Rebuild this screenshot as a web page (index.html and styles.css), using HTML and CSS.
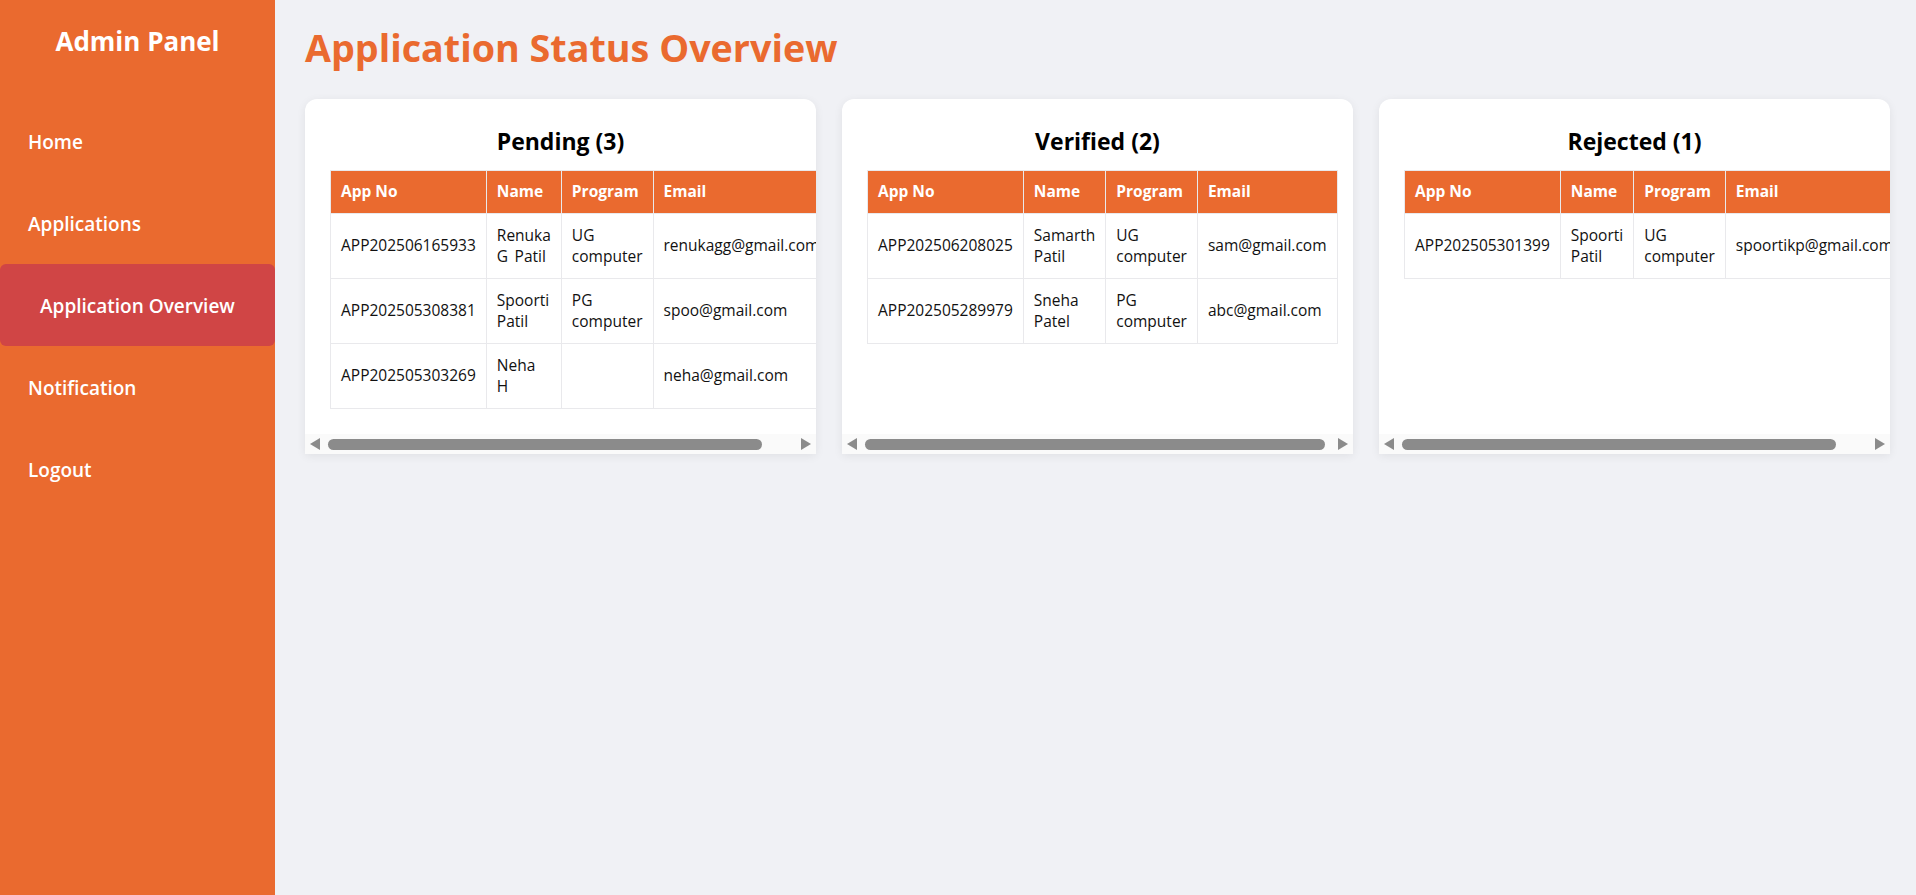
FILE: index.html
```html
<!DOCTYPE html>
<html lang="en">
<head>
<meta charset="utf-8">
<title>Admin Panel - Application Status Overview</title>
<link rel="stylesheet" href="styles.css">
</head>
<body>
<div class="layout">
  <aside class="sidebar">
    <h2 class="brand">Admin Panel</h2>
    <nav class="nav">
      <a class="nav-link" href="#">Home</a>
      <a class="nav-link" href="#">Applications</a>
      <a class="nav-link active" href="#">Application Overview</a>
      <a class="nav-link" href="#">Notification</a>
      <a class="nav-link" href="#">Logout</a>
    </nav>
  </aside>
  <main class="content">
    <h1 class="page-title">Application Status Overview</h1>
    <div class="cards">
      <section class="card">
        <div class="card-body">
          <h3 class="card-title">Pending (3)</h3>
          <table class="apps">
            <thead>
              <tr><th>App No</th><th>Name</th><th>Program</th><th>Email</th></tr>
            </thead>
            <tbody>
              <tr><td>APP202506165933</td><td>Renuka G Patil</td><td>UG computer</td><td>renukagg@gmail.com</td></tr>
              <tr><td>APP202505308381</td><td>Spoorti Patil</td><td>PG computer</td><td>spoo@gmail.com</td></tr>
              <tr><td>APP202505303269</td><td>Neha H</td><td></td><td>neha@gmail.com</td></tr>
            </tbody>
          </table>
        </div>
        <div class="hscroll">
          <span class="hscroll-btn"><span class="tri tri-left"></span></span>
          <span class="hscroll-track"><span class="hscroll-thumb" style="width: 93.3%"></span></span>
          <span class="hscroll-btn"><span class="tri tri-right"></span></span>
        </div>
      </section>
      <section class="card">
        <div class="card-body">
          <h3 class="card-title">Verified (2)</h3>
          <table class="apps">
            <thead>
              <tr><th>App No</th><th>Name</th><th>Program</th><th>Email</th></tr>
            </thead>
            <tbody>
              <tr><td>APP202506208025</td><td>Samarth Patil</td><td>UG computer</td><td>sam@gmail.com</td></tr>
              <tr><td>APP202505289979</td><td>Sneha Patel</td><td>PG computer</td><td>abc@gmail.com</td></tr>
            </tbody>
          </table>
        </div>
        <div class="hscroll">
          <span class="hscroll-btn"><span class="tri tri-left"></span></span>
          <span class="hscroll-track"><span class="hscroll-thumb" style="width: 99%"></span></span>
          <span class="hscroll-btn"><span class="tri tri-right"></span></span>
        </div>
      </section>
      <section class="card">
        <div class="card-body">
          <h3 class="card-title">Rejected (1)</h3>
          <table class="apps">
            <thead>
              <tr><th>App No</th><th>Name</th><th>Program</th><th>Email</th></tr>
            </thead>
            <tbody>
              <tr><td>APP202505301399</td><td>Spoorti Patil</td><td>UG computer</td><td>spoortikp@gmail.com</td></tr>
            </tbody>
          </table>
        </div>
        <div class="hscroll">
          <span class="hscroll-btn"><span class="tri tri-left"></span></span>
          <span class="hscroll-track"><span class="hscroll-thumb" style="width: 93.3%"></span></span>
          <span class="hscroll-btn"><span class="tri tri-right"></span></span>
        </div>
      </section>
    </div>
  </main>
</div>
</body>
</html>
```

FILE: styles.css
```css
* { box-sizing: border-box; }

html, body {
  margin: 0;
  padding: 0;
  height: 100%;
}

body {
  font-family: "Open Sans", "Noto Sans", "DejaVu Sans", sans-serif;
  background: #f0f1f5;
  color: #111;
}

.layout {
  display: flex;
  min-height: 100vh;
}

/* Sidebar */
.sidebar {
  width: 275px;
  flex: 0 0 275px;
  background: #ea6a2f;
  color: #fff;
  padding-top: 24px;
}

.brand {
  margin: 0;
  text-align: center;
  font-size: 26px;
  font-weight: 700;
  line-height: 34px;
  height: 76px;
}

.nav {
  display: flex;
  flex-direction: column;
}

.nav-link {
  display: block;
  color: #fff;
  text-decoration: none;
  font-size: 19px;
  font-weight: 600;
  line-height: 22px;
  padding: 31px 28px 29px;
  border-radius: 6px;
}

.nav-link.active {
  background: #d04545;
  padding-left: 40px;
}

/* Main */
.content {
  flex: 1;
  min-width: 0;
  padding: 0 26px 0 30px;
}

.page-title {
  margin: 0;
  padding-top: 22px;
  font-size: 37.7px;
  line-height: 52px;
  font-weight: 700;
  color: #ea6a2f;
  height: 99px;
}

.cards {
  display: flex;
  gap: 26px;
}

.card {
  flex: 1 1 0;
  min-width: 0;
  display: flex;
  flex-direction: column;
  background: #fff;
  border-radius: 12px 12px 0 0;
  box-shadow: 0 2px 10px rgba(0, 0, 0, 0.07);
  overflow: hidden;
}

.card-body {
  flex: 1;
  padding: 25px;
  overflow: hidden;
}

.card-title {
  margin: 0 0 12px;
  text-align: center;
  font-size: 23px;
  line-height: 34px;
  font-weight: 700;
  color: #000;
}

.apps {
  width: 100%;
  border-collapse: collapse;
  font-size: 15.5px;
  line-height: 21.5px;
}

.apps th,
.apps td {
  border: 1px solid #e9e9ec;
  text-align: left;
  padding: 10.5px 10px;
}

.apps td {
  word-spacing: 2.5px;
}

.apps th {
  background: #ea6a2f;
  color: #fff;
  font-weight: 700;
  padding: 10.25px 10px;
}

/* Horizontal scroll bar */
.hscroll {
  display: flex;
  align-items: center;
  height: 20px;
  background: #fafafa;
}

.hscroll-btn {
  flex: 0 0 20px;
  height: 20px;
  display: flex;
  align-items: center;
  justify-content: center;
}

.tri {
  width: 0;
  height: 0;
  border-top: 6px solid transparent;
  border-bottom: 6px solid transparent;
}

.tri-left {
  border-right: 10px solid #8b8b8b;
}

.tri-right {
  border-left: 10px solid #8b8b8b;
}

.hscroll-track {
  flex: 1;
  padding: 0 3px;
  display: flex;
  align-items: center;
}

.hscroll-thumb {
  display: block;
  height: 11px;
  border-radius: 6px;
  background: #8b8b8b;
}
```
